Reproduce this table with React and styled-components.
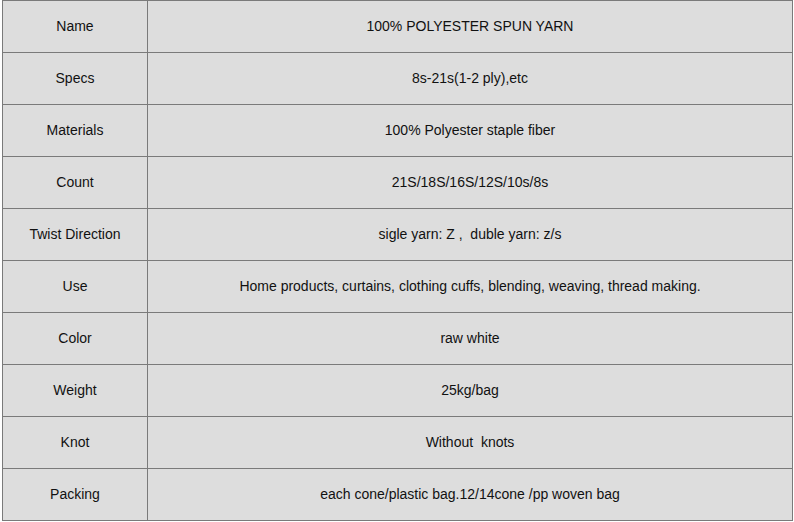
import React from "react"
import styled, {createGlobalStyle} from "styled-components"

const GlobalStyle = createGlobalStyle`
    body {
        margin: 0;
        background: #ffffff;
        font-family: "Liberation Sans", Arial, sans-serif;
    }
`

const specs = [
    ["Name", "100% POLYESTER SPUN YARN"],
    ["Specs", "8s-21s(1-2 ply),etc"],
    ["Materials", "100% Polyester staple fiber"],
    ["Count", "21S/18S/16S/12S/10s/8s"],
    ["Twist Direction", "sigle yarn: Z ,  duble yarn: z/s"],
    ["Use", "Home products, curtains, clothing cuffs, blending, weaving, thread making."],
    ["Color", "raw white"],
    ["Weight", "25kg/bag"],
    ["Knot", "Without  knots"],
    ["Packing", "each cone/plastic bag.12/14cone /pp woven bag"],
]

const Table = styled.table`
    margin-left: 2px;
    width: 791px;
    border-collapse: collapse;
    background: #dddddd;
    color: #111111;
    font-size: 14px;
`

const Row = styled.tr`
    height: 52px;
`

const Cell = styled.td`
    border: 1px solid #7a7a7a;
    padding: 0 6px 2px;
    text-align: center;
    vertical-align: middle;
    white-space: pre;
    width: ${(p) => (p.$label ? "132px" : "auto")};
`

const App = () => {
    return (
        <>
            <GlobalStyle />
            <Table>
                <tbody>
                    {specs.map(([label, value]) => (
                        <Row key={label}>
                            <Cell $label>{label}</Cell>
                            <Cell>{value}</Cell>
                        </Row>
                    ))}
                </tbody>
            </Table>
        </>
    )
}

export default App
